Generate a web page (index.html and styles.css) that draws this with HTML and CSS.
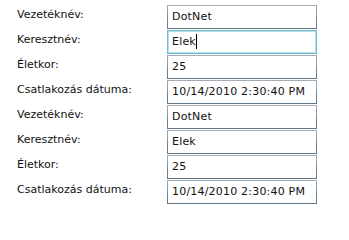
FILE: index.html
```html
<!DOCTYPE html>
<html>
<head>
<meta charset="utf-8">
<link rel="stylesheet" href="styles.css">
</head>
<body>
<div class="form">
  <div class="label">Vezetéknév:</div><div class="textbox">DotNet</div>
  <div class="label">Keresztnév:</div><div class="textbox focused">Elek<span class="caret"></span></div>
  <div class="label">Életkor:</div><div class="textbox">25</div>
  <div class="label">Csatlakozás dátuma:</div><div class="textbox">10/14/2010 2:30:40 PM</div>
  <div class="label">Vezetéknév:</div><div class="textbox">DotNet</div>
  <div class="label">Keresztnév:</div><div class="textbox">Elek</div>
  <div class="label">Életkor:</div><div class="textbox">25</div>
  <div class="label">Csatlakozás dátuma:</div><div class="textbox">10/14/2010 2:30:40 PM</div>
</div>
</body>
</html>
```
FILE: styles.css
```css
html, body {
  margin: 0;
  background: #fff;
}
.form {
  display: grid;
  grid-template-columns: 150px 150px;
  row-gap: 1px;
  padding: 5px 0 0 17px;
  font-family: "DejaVu Sans", Verdana, sans-serif;
  font-size: 11px;
  color: #111;
}
.label {
  line-height: 14px;
  padding-top: 3px;
  white-space: nowrap;
}
.textbox {
  box-sizing: border-box;
  height: 24px;
  line-height: 14px;
  padding: 4px 4px;
  letter-spacing: 0.2px;
  border: 1px solid #8399a9;
  border-image: linear-gradient(#a3aeb9, #8399a9 40%, #718597 60%, #617584) 1;
  white-space: nowrap;
  overflow: hidden;
}
.textbox.focused {
  border: 1px solid #6dbdd1;
  border-image: none;
  box-shadow: inset 0 0 0 1px #b8e0ea;
}
.caret {
  display: inline-block;
  width: 1px;
  height: 15px;
  margin-top: -1px;
  background: #000;
  vertical-align: top;
}
```
